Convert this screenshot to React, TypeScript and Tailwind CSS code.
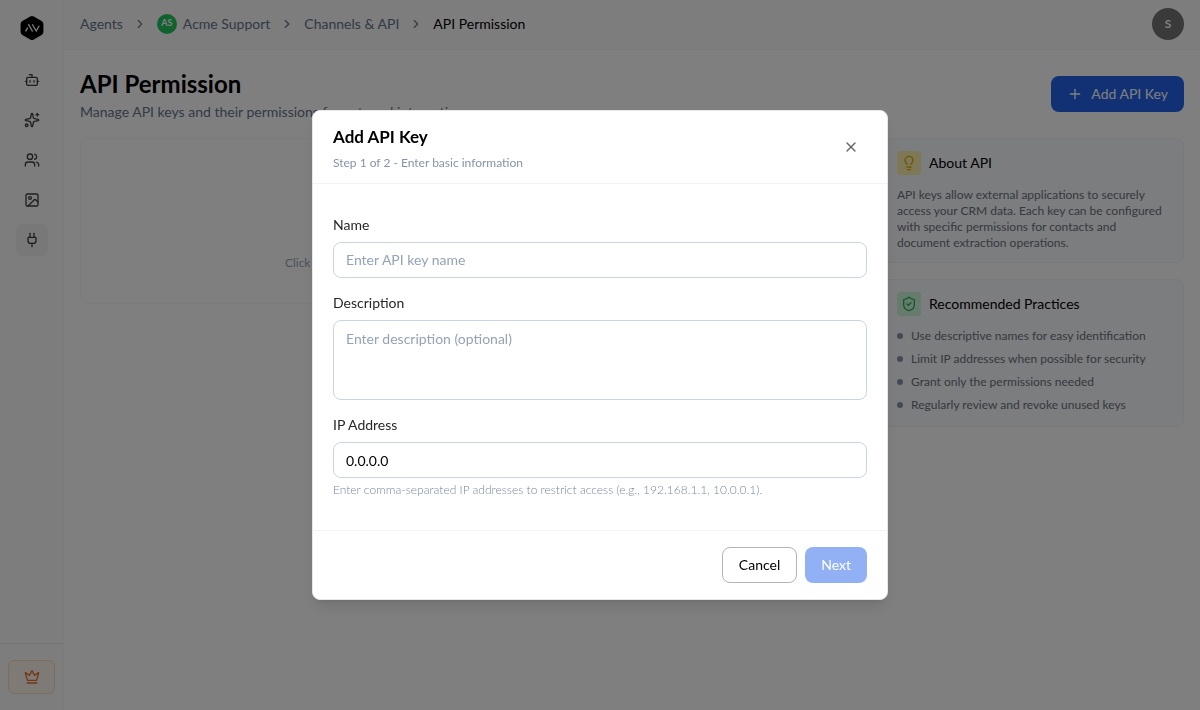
import React, { useState } from "react";
import {
    Bot,
    ChevronRight,
    Crown,
    Image,
    KeyRound,
    Lightbulb,
    Plug,
    Plus,
    ShieldCheck,
    Sparkles,
    Users,
    X,
} from "lucide-react";

const navItems = [
    { label: "Agents", icon: Bot, active: false },
    { label: "Automations", icon: Sparkles, active: false },
    { label: "Contacts", icon: Users, active: false },
    { label: "Media", icon: Image, active: false },
    { label: "Channels & API", icon: Plug, active: true },
];

const practices = [
    "Use descriptive names for easy identification",
    "Limit IP addresses when possible for security",
    "Grant only the permissions needed",
    "Regularly review and revoke unused keys",
];

function Logo() {
    return (
        <svg width="24" height="24" viewBox="0 0 24 24" fill="none">
            <path
                d="M10.2 .6 2.400 4.900Q.6 5.900.6 7.900v8.200q0 2 1.800 3l7.800 4.300q1.800 1 3.600 0l7.800-4.300q1.800-1 1.800-3V7.900q0-2-1.800-3L13.800.6q-1.800-1-3.600 0Z"
                fill="black"
            />
            <path
                d="m5.600 15.300 2.100-3.600M8.300 8.200l4.300 7.300M12.300 8.200l3.900 6.800 3-5.200"
                stroke="white"
                strokeWidth="1.300"
            />
        </svg>
    );
}

function Sidebar() {
    return (
        <aside className="flex w-16 shrink-0 flex-col items-center border-r border-[#f6f6f6] bg-[#fafafa]">
            <a href="#home" aria-label="Home" className="mt-4">
                <Logo />
            </a>
            <nav className="mt-6 flex flex-1 flex-col gap-2">
                {navItems.map(({ label, icon: Icon, active }) => (
                    <a
                        key={label}
                        href="#nav"
                        aria-label={label}
                        className={
                            active
                                ? "flex size-8 items-center justify-center rounded-md bg-[#f0f0f0] text-[#3f3f46]"
                                : "flex size-8 items-center justify-center rounded-md text-[#3f3f46]"
                        }
                    >
                        <Icon size={16} />
                    </a>
                ))}
            </nav>
            <div className="w-full border-t border-gray-200 px-2 py-4">
                <button
                    type="button"
                    aria-label="Upgrade"
                    className="flex h-[34px] w-full items-center justify-center rounded-md border border-[#fcd9b4] bg-[#fcf5ec] text-[#e0702a]"
                >
                    <Crown size={16} />
                </button>
            </div>
        </aside>
    );
}

function TopBar() {
    return (
        <header className="flex h-[50px] items-center justify-between border-b border-[#f4f4f5] bg-[#fafafa] px-4 pb-0.5">
            <nav className="flex items-center gap-2.5 text-sm text-[#64748b]">
                <a href="#agents">Agents</a>
                <ChevronRight size={14} />
                <a href="#agent" className="flex items-center gap-1.5">
                    <span className="flex size-5 items-center justify-center rounded-full bg-[#22c55e] text-[9px] font-bold text-white">
                        AS
                    </span>
                    Acme Support
                </a>
                <ChevronRight size={14} />
                <a href="#channels">Channels & API</a>
                <ChevronRight size={14} />
                <span className="text-black">API Permission</span>
            </nav>
            <button
                type="button"
                className="flex size-8 items-center justify-center rounded-full bg-[#757575] text-xs font-bold text-white"
            >
                S
            </button>
        </header>
    );
}

function InfoPanels() {
    return (
        <div className="flex w-[304px] shrink-0 flex-col gap-4">
            <section className="rounded-lg border border-[#eef3f9] bg-[#f8fafc] px-4 pt-3 pb-[11px]">
                <div className="flex items-center gap-2">
                    <span className="flex size-6 items-center justify-center rounded bg-[#fcf0ae] text-[#d9ae0c]">
                        <Lightbulb size={16} />
                    </span>
                    <h2 className="text-sm text-black">About API</h2>
                </div>
                <p className="mt-3 text-xs text-[#6b7280]">
                    API keys allow external applications to securely access
                    your CRM data. Each key can be configured with specific
                    permissions for contacts and document extraction
                    operations.
                </p>
            </section>
            <section className="rounded-lg border border-[#eef3f9] bg-[#f8fafc] px-4 pt-3 pb-3.5">
                <div className="flex items-center gap-2">
                    <span className="flex size-6 items-center justify-center rounded bg-[#cdf5da] text-[#22b457]">
                        <ShieldCheck size={16} />
                    </span>
                    <h2 className="text-sm text-black">
                        Recommended Practices
                    </h2>
                </div>
                <ul className="mt-3 flex flex-col gap-2 text-xs leading-[15px] text-[#6b7280]">
                    {practices.map((text) => (
                        <li key={text} className="flex items-center gap-2">
                            <span className="size-1.5 rounded-full bg-[#8a90ab]" />
                            {text}
                        </li>
                    ))}
                </ul>
            </section>
        </div>
    );
}

function AddKeyDialog() {
    const [name, setName] = useState("");
    const [description, setDescription] = useState("");
    const [ip, setIp] = useState("0.0.0.0");

    return (
        <div className="fixed inset-0 flex items-center justify-center bg-black/50">
            <form
                role="dialog"
                aria-labelledby="dialog-title"
                className="w-full max-w-xl rounded-lg border border-gray-200 bg-white shadow-lg"
            >
                <div className="flex items-center justify-between border-b border-[#f1f3f5] px-5 py-3">
                    <div>
                        <h2
                            id="dialog-title"
                            className="text-[17px] leading-7 font-bold text-black"
                        >
                            Add API Key
                        </h2>
                        <p className="mt-1 text-xs text-[#8593a8]">
                            Step 1 of 2 - Enter basic information
                        </p>
                    </div>
                    <button
                        type="button"
                        aria-label="Close"
                        className="flex size-8 items-center justify-center text-[#666666]"
                    >
                        <X size={16} />
                    </button>
                </div>
                <div className="flex flex-col gap-4 px-5 py-8">
                    <div className="flex flex-col gap-2">
                        <label
                            htmlFor="name"
                            className="text-sm leading-[18px] text-[#27272a]"
                        >
                            Name
                        </label>
                        <input
                            id="name"
                            value={name}
                            onChange={(e) => setName(e.target.value)}
                            placeholder="Enter API key name"
                            className="h-9 rounded-lg border border-[#cbd5e1] px-3 pb-0.5 text-sm placeholder:text-[#94a3b8]"
                        />
                    </div>
                    <div className="flex flex-col gap-2">
                        <label
                            htmlFor="description"
                            className="text-sm leading-[18px] text-[#27272a]"
                        >
                            Description
                        </label>
                        <textarea
                            id="description"
                            value={description}
                            onChange={(e) => setDescription(e.target.value)}
                            placeholder="Enter description (optional)"
                            className="h-20 resize-none rounded-lg border border-[#cbd5e1] px-3 py-2 text-sm placeholder:text-[#94a3b8]"
                        />
                    </div>
                    <div className="flex flex-col">
                        <label
                            htmlFor="ip"
                            className="text-sm leading-[18px] text-[#27272a]"
                        >
                            IP Address
                        </label>
                        <input
                            id="ip"
                            value={ip}
                            onChange={(e) => setIp(e.target.value)}
                            className="mt-2 h-9 rounded-lg border border-[#cbd5e1] px-3 text-sm text-black"
                        />
                        <p className="mt-1 text-xs font-light text-[#7787a0]">
                            Enter comma-separated IP addresses to restrict
                            access (e.g., 192.168.1.1, 10.0.0.1).
                        </p>
                    </div>
                </div>
                <div className="flex justify-end gap-2 border-t border-[#f1f3f5] px-5 py-4">
                    <button
                        type="button"
                        className="h-9 rounded-lg border border-[#b4b4b4] px-4 text-sm text-black"
                    >
                        Cancel
                    </button>
                    <button
                        type="submit"
                        disabled
                        className="h-9 rounded-lg bg-[#92b1f5] px-4 text-sm text-white"
                    >
                        Next
                    </button>
                </div>
            </form>
        </div>
    );
}

export default function App() {
    return (
        <div className="flex min-h-screen bg-white font-[Lato,sans-serif]">
            <Sidebar />
            <div className="flex min-w-0 flex-1 flex-col">
                <TopBar />
                <main className="p-4">
                    <div className="flex items-center justify-between">
                        <div>
                            <h1 className="text-2xl leading-9 font-bold text-black">
                                API Permission
                            </h1>
                            <p className="text-sm text-[#64748b]">
                                Manage API keys and their permissions for
                                external integrations
                            </p>
                        </div>
                        <button
                            type="button"
                            className="flex h-9 items-center gap-2 rounded-lg bg-[#2563eb] px-4 text-sm text-white"
                        >
                            <Plus size={16} />
                            Add API Key
                        </button>
                    </div>
                    <div className="mt-4 flex items-start gap-4">
                        <section className="flex flex-1 flex-col items-center rounded-lg border border-[#f6f6f7] px-4 py-8 text-center">
                            <KeyRound size={48} className="text-slate-400" />
                            <h2 className="mt-3 text-sm text-black">
                                No API keys yet
                            </h2>
                            <p className="mt-1 text-xs text-[#94a3b8]">
                                Click "Add API Key" to create your first key
                                and start integrating with us
                            </p>
                        </section>
                        <InfoPanels />
                    </div>
                </main>
            </div>
            <AddKeyDialog />
        </div>
    );
}
